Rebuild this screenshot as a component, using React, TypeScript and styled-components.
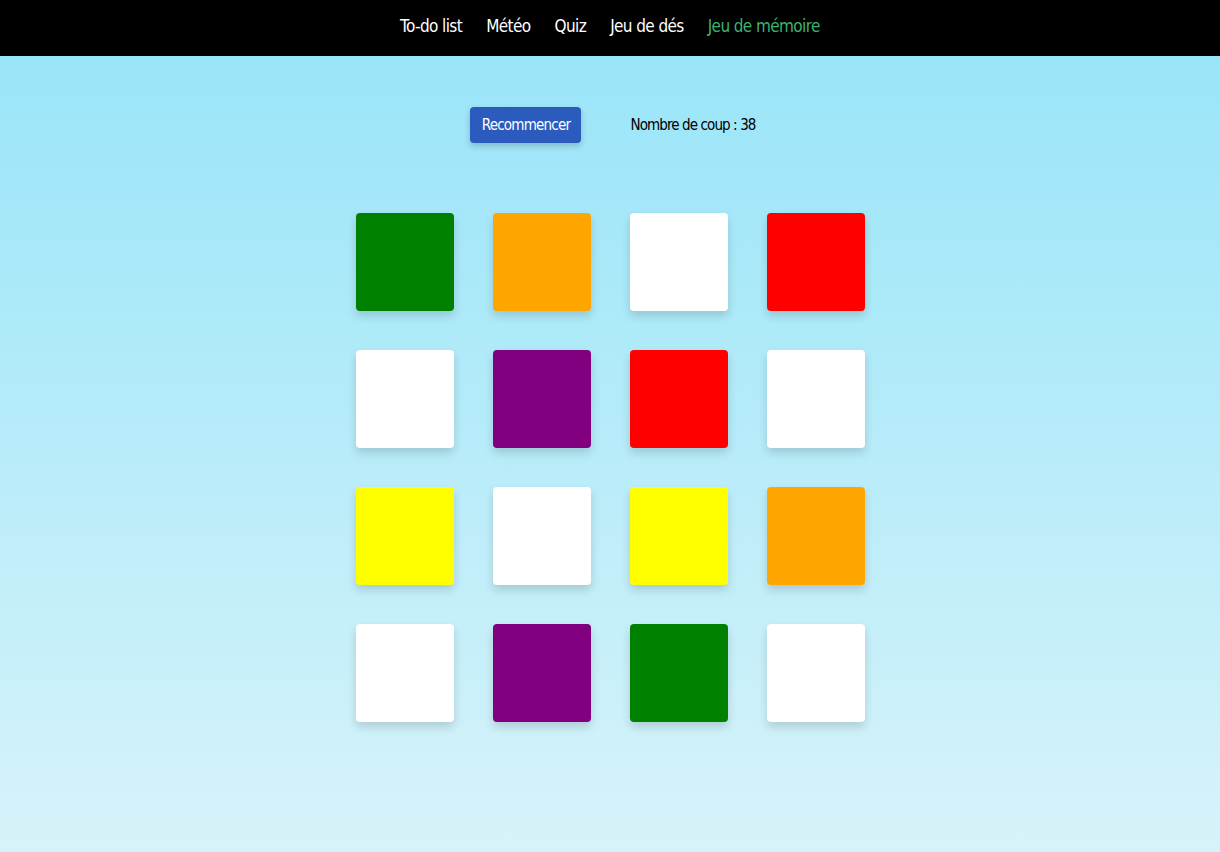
import React from "react";
import styled, { createGlobalStyle } from "styled-components";

const Global = createGlobalStyle`
  html, body { margin: 0; padding: 0; }
  body {
    font-family: "DejaVu Sans Condensed", "DejaVu Sans", sans-serif;
    font-stretch: condensed;
  }
`;

const Page = styled.div`
  min-height: 852px;
  display: flex;
  flex-direction: column;
  background: linear-gradient(180deg, #95e4f8 0%, #d7f3fa 100%);
`;

const Nav = styled.nav`
  height: 56px;
  background: #000;
  display: flex;
  justify-content: center;
  align-items: center;
  gap: 24px;
  padding-bottom: 4px;
  box-sizing: border-box;
`;

const NavLink = styled.a<{ $active?: boolean }>`
  color: ${(p) => (p.$active ? "#3cb371" : "#ffffff")};
  font-size: 17px;
  letter-spacing: -0.6px;
  text-decoration: none;
  white-space: nowrap;
  cursor: pointer;
`;

const Controls = styled.div`
  display: flex;
  justify-content: center;
  align-items: center;
  gap: 49px;
  margin-top: 51px;
  padding-left: 6px;
`;

const Button = styled.button`
  width: 111px;
  height: 36px;
  border: none;
  border-radius: 4px;
  background: #2c5bbe;
  color: #fff;
  font-family: inherit;
  font-size: 15px;
  letter-spacing: -0.8px;
  white-space: nowrap;
  padding: 0;
  box-shadow: 0 3px 6px rgba(0, 0, 0, 0.2);
  cursor: pointer;
`;

const Counter = styled.span`
  font-size: 15px;
  letter-spacing: -0.9px;
  color: #000;
  white-space: nowrap;
`;

const Grid = styled.div`
  display: grid;
  grid-template-columns: repeat(4, 98px);
  grid-auto-rows: 98px;
  gap: 39px;
  justify-content: center;
  margin-top: 70px;
  padding-left: 1px;
`;

const Card = styled.div<{ $color: string }>`
  background: ${(p) => p.$color};
  border-radius: 4px;
  box-shadow: 0 5px 10px rgba(0, 0, 0, 0.15);
`;

const colors = [
  "#008000", "#ffa500", "#ffffff", "#ff0000",
  "#ffffff", "#800080", "#ff0000", "#ffffff",
  "#ffff00", "#ffffff", "#ffff00", "#ffa500",
  "#ffffff", "#800080", "#008000", "#ffffff",
];

export default function App() {
  return (
    <>
      <Global />
      <Page>
        <Nav>
          <NavLink>To-do list</NavLink>
          <NavLink>Météo</NavLink>
          <NavLink>Quiz</NavLink>
          <NavLink>Jeu de dés</NavLink>
          <NavLink $active>Jeu de mémoire</NavLink>
        </Nav>
        <Controls>
          <Button>Recommencer</Button>
          <Counter>Nombre de coup : 38</Counter>
        </Controls>
        <Grid>
          {colors.map((c, i) => (
            <Card key={i} $color={c} />
          ))}
        </Grid>
      </Page>
    </>
  );
}
